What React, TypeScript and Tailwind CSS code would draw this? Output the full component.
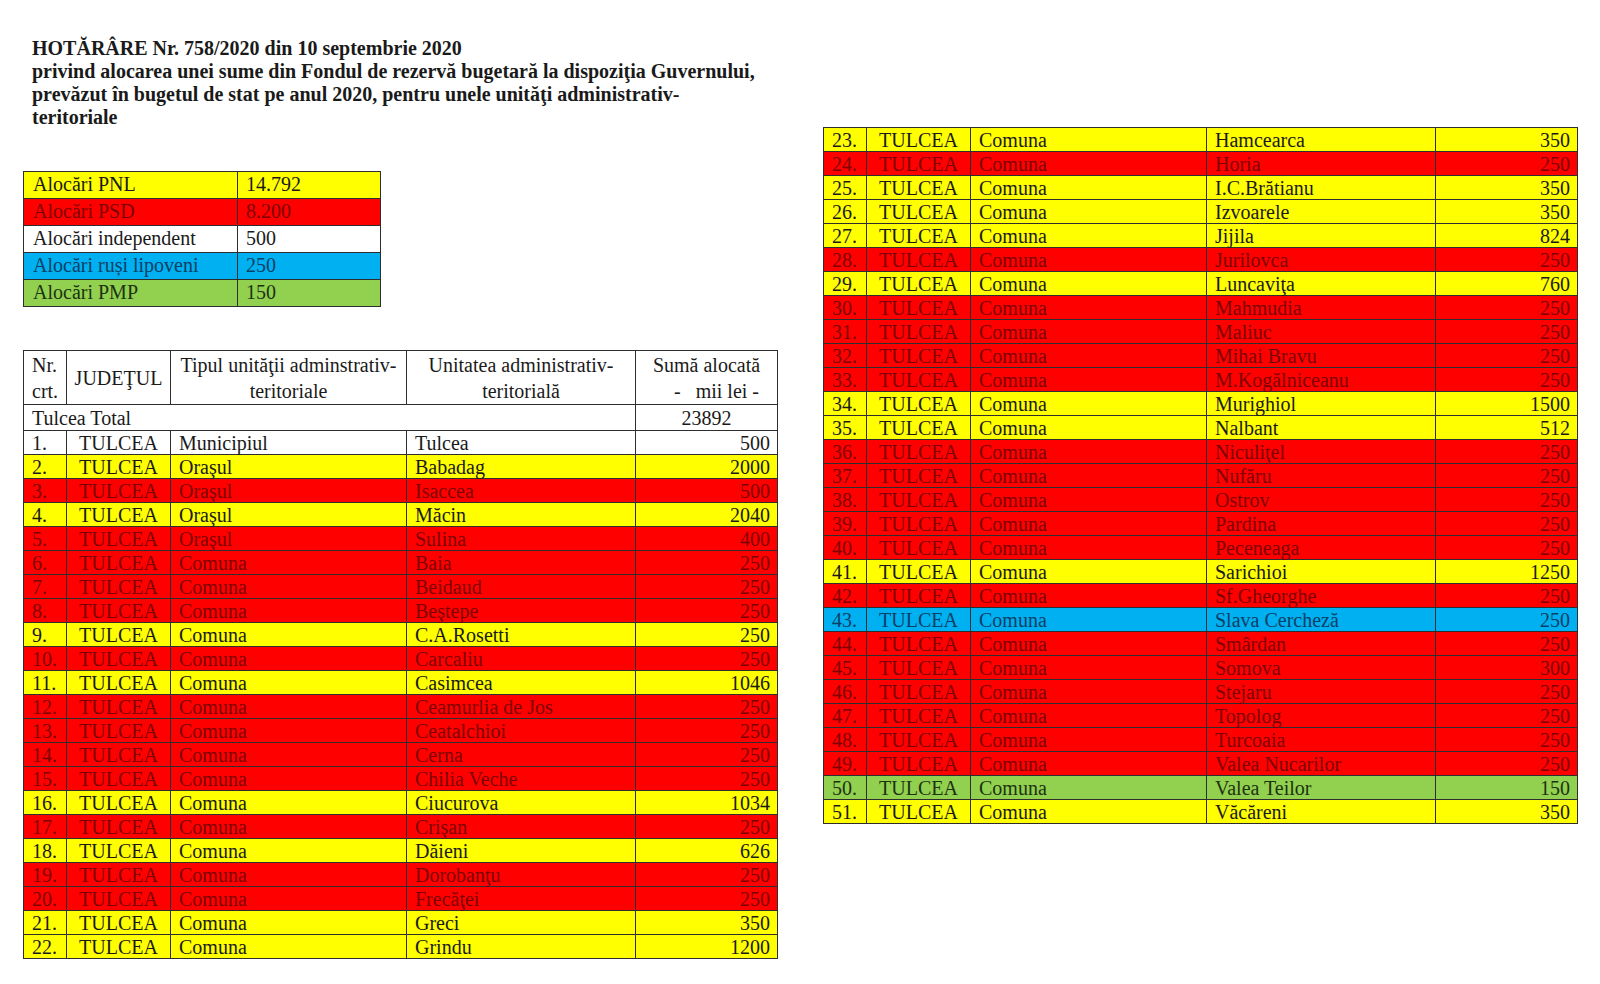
import React from 'react';

type Tone = 'W' | 'Y' | 'R' | 'B' | 'G';

interface Row {
  nr: number;
  tip: string;
  unitate: string;
  suma: number;
  tone: Tone;
}

const TONES: Record<Tone, string> = {
  W: 'bg-white text-[#1a1a1a]',
  Y: 'bg-[#ffff00] text-[#1a1a1a]',
  R: 'bg-[#ff0000] text-[#7d0000]',
  B: 'bg-[#00b0f0] text-[#0b3f66]',
  G: 'bg-[#92d050] text-[#1c3310]',
};

const LEGEND: { label: string; value: string; tone: Tone }[] = [
  { label: 'Alocări PNL', value: '14.792', tone: 'Y' },
  { label: 'Alocări PSD', value: '8.200', tone: 'R' },
  { label: 'Alocări independent', value: '500', tone: 'W' },
  { label: 'Alocări ruși lipoveni', value: '250', tone: 'B' },
  { label: 'Alocări PMP', value: '150', tone: 'G' },
];

const ROWS: Row[] = [
  { nr: 1, tip: 'Municipiul', unitate: 'Tulcea', suma: 500, tone: 'W' },
  { nr: 2, tip: 'Oraşul', unitate: 'Babadag', suma: 2000, tone: 'Y' },
  { nr: 3, tip: 'Oraşul', unitate: 'Isaccea', suma: 500, tone: 'R' },
  { nr: 4, tip: 'Oraşul', unitate: 'Măcin', suma: 2040, tone: 'Y' },
  { nr: 5, tip: 'Oraşul', unitate: 'Sulina', suma: 400, tone: 'R' },
  { nr: 6, tip: 'Comuna', unitate: 'Baia', suma: 250, tone: 'R' },
  { nr: 7, tip: 'Comuna', unitate: 'Beidaud', suma: 250, tone: 'R' },
  { nr: 8, tip: 'Comuna', unitate: 'Beştepe', suma: 250, tone: 'R' },
  { nr: 9, tip: 'Comuna', unitate: 'C.A.Rosetti', suma: 250, tone: 'Y' },
  { nr: 10, tip: 'Comuna', unitate: 'Carcaliu', suma: 250, tone: 'R' },
  { nr: 11, tip: 'Comuna', unitate: 'Casimcea', suma: 1046, tone: 'Y' },
  { nr: 12, tip: 'Comuna', unitate: 'Ceamurlia de Jos', suma: 250, tone: 'R' },
  { nr: 13, tip: 'Comuna', unitate: 'Ceatalchioi', suma: 250, tone: 'R' },
  { nr: 14, tip: 'Comuna', unitate: 'Cerna', suma: 250, tone: 'R' },
  { nr: 15, tip: 'Comuna', unitate: 'Chilia Veche', suma: 250, tone: 'R' },
  { nr: 16, tip: 'Comuna', unitate: 'Ciucurova', suma: 1034, tone: 'Y' },
  { nr: 17, tip: 'Comuna', unitate: 'Crişan', suma: 250, tone: 'R' },
  { nr: 18, tip: 'Comuna', unitate: 'Dăieni', suma: 626, tone: 'Y' },
  { nr: 19, tip: 'Comuna', unitate: 'Dorobanţu', suma: 250, tone: 'R' },
  { nr: 20, tip: 'Comuna', unitate: 'Frecăţei', suma: 250, tone: 'R' },
  { nr: 21, tip: 'Comuna', unitate: 'Greci', suma: 350, tone: 'Y' },
  { nr: 22, tip: 'Comuna', unitate: 'Grindu', suma: 1200, tone: 'Y' },
  { nr: 23, tip: 'Comuna', unitate: 'Hamcearca', suma: 350, tone: 'Y' },
  { nr: 24, tip: 'Comuna', unitate: 'Horia', suma: 250, tone: 'R' },
  { nr: 25, tip: 'Comuna', unitate: 'I.C.Brătianu', suma: 350, tone: 'Y' },
  { nr: 26, tip: 'Comuna', unitate: 'Izvoarele', suma: 350, tone: 'Y' },
  { nr: 27, tip: 'Comuna', unitate: 'Jijila', suma: 824, tone: 'Y' },
  { nr: 28, tip: 'Comuna', unitate: 'Jurilovca', suma: 250, tone: 'R' },
  { nr: 29, tip: 'Comuna', unitate: 'Luncaviţa', suma: 760, tone: 'Y' },
  { nr: 30, tip: 'Comuna', unitate: 'Mahmudia', suma: 250, tone: 'R' },
  { nr: 31, tip: 'Comuna', unitate: 'Maliuc', suma: 250, tone: 'R' },
  { nr: 32, tip: 'Comuna', unitate: 'Mihai Bravu', suma: 250, tone: 'R' },
  { nr: 33, tip: 'Comuna', unitate: 'M.Kogălniceanu', suma: 250, tone: 'R' },
  { nr: 34, tip: 'Comuna', unitate: 'Murighiol', suma: 1500, tone: 'Y' },
  { nr: 35, tip: 'Comuna', unitate: 'Nalbant', suma: 512, tone: 'Y' },
  { nr: 36, tip: 'Comuna', unitate: 'Niculiţel', suma: 250, tone: 'R' },
  { nr: 37, tip: 'Comuna', unitate: 'Nufăru', suma: 250, tone: 'R' },
  { nr: 38, tip: 'Comuna', unitate: 'Ostrov', suma: 250, tone: 'R' },
  { nr: 39, tip: 'Comuna', unitate: 'Pardina', suma: 250, tone: 'R' },
  { nr: 40, tip: 'Comuna', unitate: 'Peceneaga', suma: 250, tone: 'R' },
  { nr: 41, tip: 'Comuna', unitate: 'Sarichioi', suma: 1250, tone: 'Y' },
  { nr: 42, tip: 'Comuna', unitate: 'Sf.Gheorghe', suma: 250, tone: 'R' },
  { nr: 43, tip: 'Comuna', unitate: 'Slava Cercheză', suma: 250, tone: 'B' },
  { nr: 44, tip: 'Comuna', unitate: 'Smârdan', suma: 250, tone: 'R' },
  { nr: 45, tip: 'Comuna', unitate: 'Somova', suma: 300, tone: 'R' },
  { nr: 46, tip: 'Comuna', unitate: 'Stejaru', suma: 250, tone: 'R' },
  { nr: 47, tip: 'Comuna', unitate: 'Topolog', suma: 250, tone: 'R' },
  { nr: 48, tip: 'Comuna', unitate: 'Turcoaia', suma: 250, tone: 'R' },
  { nr: 49, tip: 'Comuna', unitate: 'Valea Nucarilor', suma: 250, tone: 'R' },
  { nr: 50, tip: 'Comuna', unitate: 'Valea Teilor', suma: 150, tone: 'G' },
  { nr: 51, tip: 'Comuna', unitate: 'Văcăreni', suma: 350, tone: 'Y' },
];

const cell = 'border border-[#2e2e2e] h-[24px] py-0 leading-[22px] whitespace-nowrap';

function Cols() {
  return (
    <colgroup>
      <col className="w-[43px]" />
      <col className="w-[104px]" />
      <col className="w-[236px]" />
      <col className="w-[229px]" />
      <col className="w-[142px]" />
    </colgroup>
  );
}

function DataRow({ row }: { row: Row }) {
  return (
    <tr className={TONES[row.tone]}>
      <td className={`${cell} pl-[8px]`}>{row.nr}.</td>
      <td className={`${cell} text-center`}>TULCEA</td>
      <td className={`${cell} pl-[8px]`}>{row.tip}</td>
      <td className={`${cell} pl-[8px]`}>{row.unitate}</td>
      <td className={`${cell} text-right pr-[7px]`}>{row.suma}</td>
    </tr>
  );
}

export default function App() {
  const left = ROWS.slice(0, 22);
  const right = ROWS.slice(22);

  return (
    <div className="min-h-screen bg-white text-[#1a1a1a] font-['Liberation_Serif','Times_New_Roman',serif] text-[20px]">
      <div className="flex gap-[46px] pl-[23px]">
        <div className="w-[754px] shrink-0">
          <h1 className="pt-[37px] pl-[9px] font-bold text-[20px] leading-[23px] whitespace-nowrap">
            HOTĂRÂRE Nr. 758/2020 din 10 septembrie 2020
            <br />
            privind alocarea unei sume din Fondul de rezervă bugetară la dispoziţia Guvernului,
            <br />
            prevăzut în bugetul de stat pe anul 2020, pentru unele unităţi administrativ-
            <br />
            teritoriale
          </h1>

          <table className="mt-[42px] border-collapse table-fixed w-[357px]">
            <colgroup>
              <col className="w-[214px]" />
              <col className="w-[143px]" />
            </colgroup>
            <tbody>
              {LEGEND.map((l) => (
                <tr key={l.label} className={TONES[l.tone]}>
                  <td className="border border-[#2e2e2e] h-[27px] pt-0 pb-[2px] pl-[9px] leading-[23px] whitespace-nowrap">{l.label}</td>
                  <td className="border border-[#2e2e2e] h-[27px] pt-0 pb-[2px] pl-[8px] leading-[23px]">{l.value}</td>
                </tr>
              ))}
            </tbody>
          </table>

          <table className="mt-[43px] border-collapse table-fixed w-[754px]">
            <Cols />
            <thead>
              <tr className="bg-white">
                <th className="border border-[#2e2e2e] h-[54px] font-normal text-left pl-[8px] leading-[26px] align-middle">
                  Nr.
                  <br />
                  crt.
                </th>
                <th className="border border-[#2e2e2e] font-normal text-center leading-[26px]">JUDEŢUL</th>
                <th className="border border-[#2e2e2e] font-normal text-center leading-[26px]">
                  Tipul unităţii adminstrativ-
                  <br />
                  teritoriale
                </th>
                <th className="border border-[#2e2e2e] font-normal text-center leading-[26px]">
                  Unitatea administrativ-
                  <br />
                  teritorială
                </th>
                <th className="border border-[#2e2e2e] font-normal text-center leading-[26px] whitespace-pre">
                  Sumă alocată
                  <br />
                  {'    -   mii lei -'}
                </th>
              </tr>
            </thead>
            <tbody>
              <tr className="bg-white">
                <td colSpan={4} className="border border-[#2e2e2e] h-[26px] py-0 pl-[8px] leading-[24px]">
                  Tulcea Total
                </td>
                <td className="border border-[#2e2e2e] h-[26px] py-0 text-center leading-[24px]">23892</td>
              </tr>
              {left.map((r) => (
                <DataRow key={r.nr} row={r} />
              ))}
            </tbody>
          </table>
        </div>

        <div className="w-[754px] shrink-0 pt-[127px]">
          <table className="border-collapse table-fixed w-[754px]">
            <Cols />
            <tbody>
              {right.map((r) => (
                <DataRow key={r.nr} row={r} />
              ))}
            </tbody>
          </table>
        </div>
      </div>
    </div>
  );
}
